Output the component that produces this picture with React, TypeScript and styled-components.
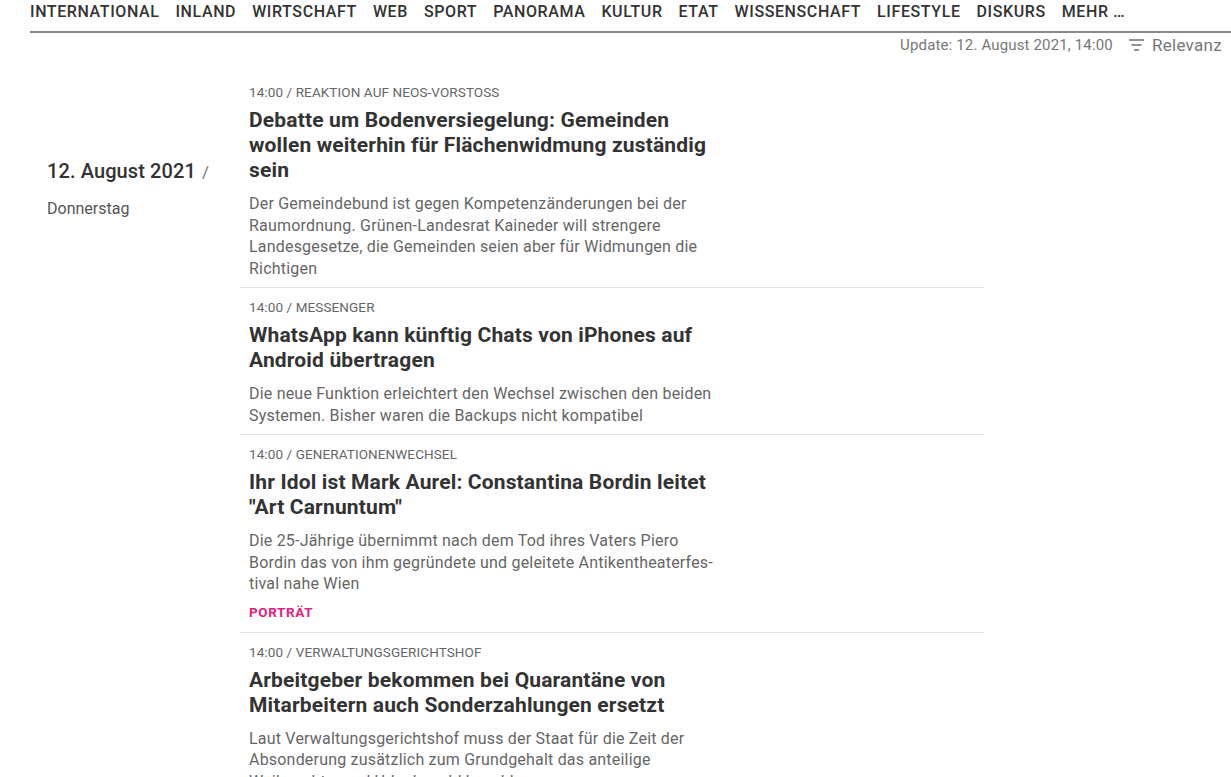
import React from "react";
import styled, { createGlobalStyle } from "styled-components";

const Global = createGlobalStyle`
  html, body { margin: 0; padding: 0; background: #fff; }
  body { font-family: Roboto, "Liberation Sans", sans-serif; color: #333; overflow: hidden; }
  * { box-sizing: border-box; }
`;

const Page = styled.div`
  width: 1231px;
  padding-left: 30px;
`;

const Nav = styled.nav`
  display: flex;
  gap: 16px;
  height: 33px;
  align-items: flex-start;
  border-bottom: 2px solid #8a8a8a;
  padding-top: 2px;
`;

const NavItem = styled.a`
  font-size: 16px;
  line-height: 20px;
  font-weight: 500;
  letter-spacing: 0.6px;
  text-transform: uppercase;
  color: #333;
  text-decoration: none;
  white-space: nowrap;
`;

const UpdateBar = styled.div`
  display: flex;
  justify-content: flex-end;
  align-items: center;
  gap: 16px;
  padding: 1px 9px 0 0;
  height: 22px;
  color: #777;
`;

const UpdateText = styled.span`
  font-size: 15px;
  line-height: 20px;
  letter-spacing: 0.15px;
`;

const Sort = styled.span`
  display: flex;
  align-items: center;
  gap: 8px;
  font-size: 17px;
  line-height: 20px;
  letter-spacing: 0.3px;
  color: #777;
`;

const Main = styled.div`
  display: grid;
  grid-template-columns: 210px 744px;
`;

const DateCol = styled.div`
  padding: 104px 0 0 17px;
`;

const DateLine = styled.div`
  font-size: 20px;
  line-height: 24px;
  font-weight: 500;
  letter-spacing: 0.1px;
  color: #333;
  white-space: nowrap;
`;

const Slash = styled.span`
  font-weight: 400;
  color: #777;
  font-size: 17px;
  margin-left: 6px;
`;

const Weekday = styled.div`
  font-size: 16px;
  line-height: 20px;
  color: #555;
  margin-top: 15px;
`;

const List = styled.div`
  display: flex;
  flex-direction: column;
`;

const Article = styled.article`
  padding: 10px 9px 8px;
  border-top: 1px solid #e2e2e2;
  &:first-child { border-top: none; padding-top: 28px; }
`;

const Meta = styled.div`
  font-size: 13.5px;
  line-height: 18px;
  color: #666;
  text-transform: uppercase;
  letter-spacing: 0.1px;
`;

const Headline = styled.h2`
  margin: 7px 0 0;
  width: 470px;
  font-size: 21px;
  line-height: 25px;
  font-weight: 700;
  letter-spacing: 0.15px;
  color: #333;
`;

const Teaser = styled.p`
  margin: 10px 0 0;
  width: 470px;
  font-size: 16px;
  line-height: 21.5px;
  letter-spacing: 0.2px;
  color: #666;
  hyphens: manual;
`;

const Tag = styled.div`
  margin: 7px 0 2px;
  font-size: 13.5px;
  line-height: 20px;
  font-weight: 700;
  letter-spacing: 0.6px;
  text-transform: uppercase;
  color: #e5207f;
`;

const navItems = [
  "International", "Inland", "Wirtschaft", "Web", "Sport", "Panorama",
  "Kultur", "Etat", "Wissenschaft", "Lifestyle", "Diskurs", "Mehr …",
];

const articles = [
  {
    meta: "14:00 / Reaktion auf NEOS-Vorstoß",
    head: "Debatte um Bodenversiegelung: Gemeinden wollen weiterhin für Flächenwidmung zuständig sein",
    teaser: "Der Gemeindebund ist gegen Kompetenzänderungen bei der Raumordnung. Grünen-Landesrat Kaineder will strengere Landesgesetze, die Gemeinden seien aber für Widmungen die Richtigen",
  },
  {
    meta: "14:00 / Messenger",
    head: "WhatsApp kann künftig Chats von iPhones auf Android übertragen",
    teaser: "Die neue Funktion erleichtert den Wechsel zwischen den beiden Systemen. Bisher waren die Backups nicht kompatibel",
  },
  {
    meta: "14:00 / Generationenwechsel",
    head: "Ihr Idol ist Mark Aurel: Constantina Bordin leitet \"Art Carnuntum\"",
    teaser: "Die 25-Jährige übernimmt nach dem Tod ihres Vaters Piero Bordin das von ihm gegründete und geleitete Antikentheaterfes\u00adtival nahe Wien",
    tag: "Porträt",
  },
  {
    meta: "14:00 / Verwaltungsgerichtshof",
    head: "Arbeitgeber bekommen bei Quarantäne von Mitarbeitern auch Sonderzahlungen ersetzt",
    teaser: "Laut Verwaltungsgerichtshof muss der Staat für die Zeit der Absonderung zusätzlich zum Grundgehalt das anteilige Weihnachts- und Urlaubsgeld bezahlen",
  },
];

const SortIcon = () => (
  <svg width="15" height="12" viewBox="0 0 15 12" fill="none" stroke="#777" strokeWidth="1.6">
    <line x1="0" y1="1" x2="15" y2="1" />
    <line x1="2.5" y1="6" x2="12.5" y2="6" />
    <line x1="5" y1="11" x2="10" y2="11" />
  </svg>
);

export default function App() {
  return (
    <Page>
      <Global />
      <Nav>
        {navItems.map((n) => (
          <NavItem key={n}>{n}</NavItem>
        ))}
      </Nav>
      <UpdateBar>
        <UpdateText>Update: 12. August 2021, 14:00</UpdateText>
        <Sort>
          <SortIcon />
          Relevanz
        </Sort>
      </UpdateBar>
      <Main>
        <DateCol>
          <DateLine>
            12. August 2021<Slash>/</Slash>
          </DateLine>
          <Weekday>Donnerstag</Weekday>
        </DateCol>
        <List>
          {articles.map((a) => (
            <Article key={a.head}>
              <Meta>{a.meta}</Meta>
              <Headline>{a.head}</Headline>
              <Teaser>{a.teaser}</Teaser>
              {a.tag && <Tag>{a.tag}</Tag>}
            </Article>
          ))}
        </List>
      </Main>
    </Page>
  );
}
